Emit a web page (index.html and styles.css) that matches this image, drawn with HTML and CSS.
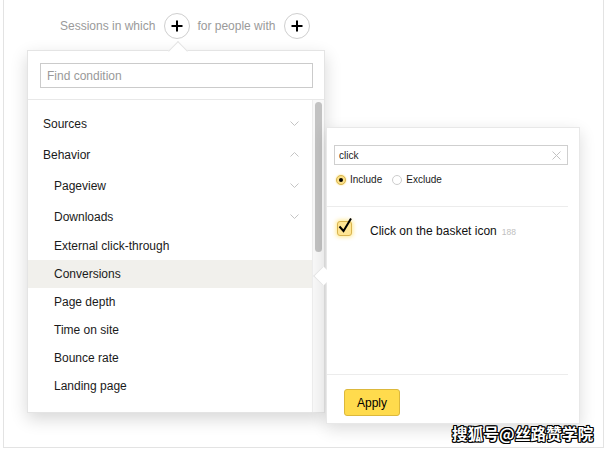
FILE: index.html
```html
<!DOCTYPE html>
<html lang="en">
<head>
<meta charset="utf-8">
<title>Segment conditions</title>
<link rel="stylesheet" href="styles.css">
</head>
<body>
<div class="page">
  <div class="filter-line">
    <span class="label">Sessions in which</span>
    <button class="add-btn add-first" type="button">
      <svg width="12" height="12" viewBox="0 0 12 12"><path d="M6 0.5v11M0.5 6h11" stroke="#000" stroke-width="2" fill="none"/></svg>
    </button>
    <span class="label">for people with</span>
    <button class="add-btn add-second" type="button">
      <svg width="12" height="12" viewBox="0 0 12 12"><path d="M6 0.5v11M0.5 6h11" stroke="#000" stroke-width="2" fill="none"/></svg>
    </button>
  </div>

  <div class="cond-menu">
    <div class="menu-arrow"></div>
    <div class="menu-search">
      <input class="find" type="text" placeholder="Find condition">
    </div>
    <div class="menu-body">
      <ul class="items">
        <li class="item group">Sources
          <svg class="chev" width="9" height="5" viewBox="0 0 9 5"><polyline points="0.5,0.5 4.5,4.5 8.5,0.5" fill="none" stroke="#c4c4c4" stroke-width="1"/></svg>
        </li>
        <li class="item group">Behavior
          <svg class="chev" width="9" height="5" viewBox="0 0 9 5"><polyline points="0.5,4.5 4.5,0.5 8.5,4.5" fill="none" stroke="#c4c4c4" stroke-width="1"/></svg>
        </li>
        <li class="item group sub">Pageview
          <svg class="chev" width="9" height="5" viewBox="0 0 9 5"><polyline points="0.5,0.5 4.5,4.5 8.5,0.5" fill="none" stroke="#c4c4c4" stroke-width="1"/></svg>
        </li>
        <li class="item group sub">Downloads
          <svg class="chev" width="9" height="5" viewBox="0 0 9 5"><polyline points="0.5,0.5 4.5,4.5 8.5,0.5" fill="none" stroke="#c4c4c4" stroke-width="1"/></svg>
        </li>
        <li class="item sub">External click-through</li>
        <li class="item sub active">Conversions</li>
        <li class="item sub">Page depth</li>
        <li class="item sub">Time on site</li>
        <li class="item sub">Bounce rate</li>
        <li class="item sub">Landing page</li>
      </ul>
      <div class="scroll"><div class="thumb"></div></div>
    </div>
  </div>

  <div class="cond-panel">
    <div class="panel-arrow"></div>
    <div class="panel-head">
      <div class="search">
        <span class="search-text">click</span>
        <svg width="9" height="9" viewBox="0 0 9 9"><path d="M0.5 0.5l8 8M8.5 0.5l-8 8" stroke="#c2c2c2" stroke-width="1" fill="none"/></svg>
      </div>
      <div class="radios">
        <span class="radio on"></span><span class="radio-label">Include</span>
        <span class="radio"></span><span class="radio-label">Exclude</span>
      </div>
    </div>
    <div class="panel-list">
      <div class="option">
        <span class="check">
          <svg class="tick" width="18" height="18" viewBox="0 0 18 18"><polyline points="3.5,9.5 7.5,14 15,1.5" fill="none" stroke="#000" stroke-width="2"/></svg>
        </span>
        <span class="option-text">Click on the basket icon</span>
        <span class="count">188</span>
      </div>
    </div>
    <div class="panel-foot">
      <button class="apply" type="button">Apply</button>
    </div>
  </div>

  <div class="watermark">搜狐号@丝路赞学院</div>
</div>
</body>
</html>
```

FILE: styles.css
```css
* { box-sizing: border-box; }

body {
  margin: 0;
  background: #fff;
  font-family: "Liberation Sans", Arial, sans-serif;
  color: #1a1a1a;
}

.page {
  position: relative;
  margin-left: 3px;
  width: 601px;
  height: 448px;
  padding-top: 13px;
  border: 1px solid #e3e3e3;
  border-top: none;
}

/* top filter line */
.filter-line {
  display: flex;
  align-items: center;
  height: 26px;
  padding-left: 56px;
  font-size: 12px;
  color: #9a9a9a;
}

.add-btn {
  width: 26px;
  height: 26px;
  padding: 0;
  border: 1px solid #cfcfcf;
  border-radius: 50%;
  background: #fff;
  display: flex;
  align-items: center;
  justify-content: center;
}
.add-first { margin: 0 7px 0 9px; }
.add-second { margin-left: 9px; }

/* left condition menu */
.cond-menu {
  position: absolute;
  left: 23px;
  top: 50px;
  width: 298px;
  height: 363px;
  background: #fff;
  border: 1px solid #e4e4e4;
  box-shadow: 0 6px 16px rgba(0, 0, 0, 0.16);
  display: flex;
  flex-direction: column;
}

.menu-arrow {
  position: absolute;
  left: 143px;
  top: -7px;
  width: 14px;
  height: 14px;
  background: #fff;
  border-top: 1px solid #e4e4e4;
  border-left: 1px solid #e4e4e4;
  transform: rotate(45deg);
}

.menu-search {
  padding: 12px 11px 11px 12px;
}

.find {
  display: block;
  width: 100%;
  height: 25px;
  margin: 0;
  padding: 0 6px;
  border: 1px solid #cbcbcb;
  border-radius: 0;
  font-family: "Liberation Sans", Arial, sans-serif;
  font-size: 12px;
  color: #1a1a1a;
  outline: none;
}
.find::placeholder { color: #999; }

.menu-body {
  flex: 1;
  display: flex;
  border-top: 1px solid #e8e8e8;
  overflow: hidden;
}

.items {
  flex: 1;
  margin: 0;
  padding: 8px 0 0;
  list-style: none;
}

.item {
  display: flex;
  align-items: center;
  justify-content: space-between;
  height: 28px;
  padding: 0 13px 0 15px;
  font-size: 12px;
  color: #1a1a1a;
}
.item.group { height: 31px; }
.item.sub { padding-left: 26px; }
.item.active { background: #f1f0ec; }

.scroll {
  width: 12px;
  background: #f8f8f8;
  border-left: 1px solid #ededed;
  padding-top: 2px;
}
.thumb {
  width: 7px;
  height: 150px;
  margin-left: 2px;
  border-radius: 4px;
  background: #c2c2c2;
}

/* right panel */
.cond-panel {
  position: absolute;
  left: 322px;
  top: 127px;
  width: 254px;
  height: 297px;
  background: #fff;
  border: 1px solid #e8e8e8;
  box-shadow: 0 5px 15px rgba(0, 0, 0, 0.14);
  padding-right: 11px;
  display: flex;
  flex-direction: column;
}

.panel-arrow {
  position: absolute;
  left: -11px;
  top: 141px;
  width: 14px;
  height: 14px;
  background: #fff;
  border-left: 1px solid #e4e4e4;
  border-bottom: 1px solid #e4e4e4;
  transform: rotate(45deg);
}

.panel-head {
  padding: 17px 0 21px 7px;
  border-bottom: 1px solid #ececec;
}

.search {
  display: flex;
  align-items: center;
  justify-content: space-between;
  height: 20px;
  padding: 0 6px 0 4px;
  border: 1px solid #cfcfcf;
  font-size: 10px;
  color: #1a1a1a;
}

.radios {
  display: flex;
  align-items: center;
  margin-top: 9px;
  padding-left: 2px;
  font-size: 10px;
  color: #1a1a1a;
}
.radio {
  position: relative;
  width: 10px;
  height: 10px;
  border: 1px solid #cdcdcd;
  border-radius: 50%;
  background: #fff;
}
.radio.on {
  background: #fbe08a;
  border-color: #d7b552;
  box-shadow: 0 0 2px rgba(255, 196, 0, 0.6);
}
.radio.on::after {
  content: "";
  position: absolute;
  left: 2px;
  top: 2px;
  width: 4px;
  height: 4px;
  border-radius: 50%;
  background: #000;
}
.radio-label { margin: 0 10px 0 4px; }

.panel-list {
  flex: 1;
  padding: 14px 0 0 10px;
}

.option {
  display: flex;
  align-items: flex-start;
}
.check {
  position: relative;
  width: 15px;
  height: 15px;
  border: 1px solid #d9b450;
  border-radius: 3px;
  background: #ffe593;
  box-shadow: 0 0 4px 1px rgba(255, 204, 0, 0.45);
}
.tick {
  position: absolute;
  left: -2px;
  top: -5px;
}
.option-text {
  margin: 3px 0 0 18px;
  line-height: 15px;
  font-size: 12px;
  color: #111;
}
.count {
  margin: 4px 0 0 5px;
  line-height: 15px;
  font-size: 8.5px;
  color: #c0c0c0;
}

.panel-foot {
  padding: 14px 0 7px 17px;
  border-top: 1px solid #ececec;
}

.apply {
  display: block;
  width: 56px;
  height: 27px;
  padding: 0;
  border: 1px solid #dcb83c;
  border-radius: 3px;
  background: #ffdb4d;
  font-family: "Liberation Sans", Arial, sans-serif;
  font-size: 12px;
  color: #000;
}

/* watermark overlay */
.watermark {
  position: absolute;
  left: 448px;
  top: 423px;
  font-family: "Noto Sans CJK SC", sans-serif;
  font-size: 15.5px;
  font-weight: 700;
  line-height: 20px;
  letter-spacing: 0.2px;
  color: #fff;
  text-shadow: 1px 0 0 #000, -1px 0 0 #000, 0 1px 0 #000, 0 -1px 0 #000,
    1px 1px 0 #000, -1px -1px 0 #000, 1px -1px 0 #000, -1px 1px 0 #000;
}
```
